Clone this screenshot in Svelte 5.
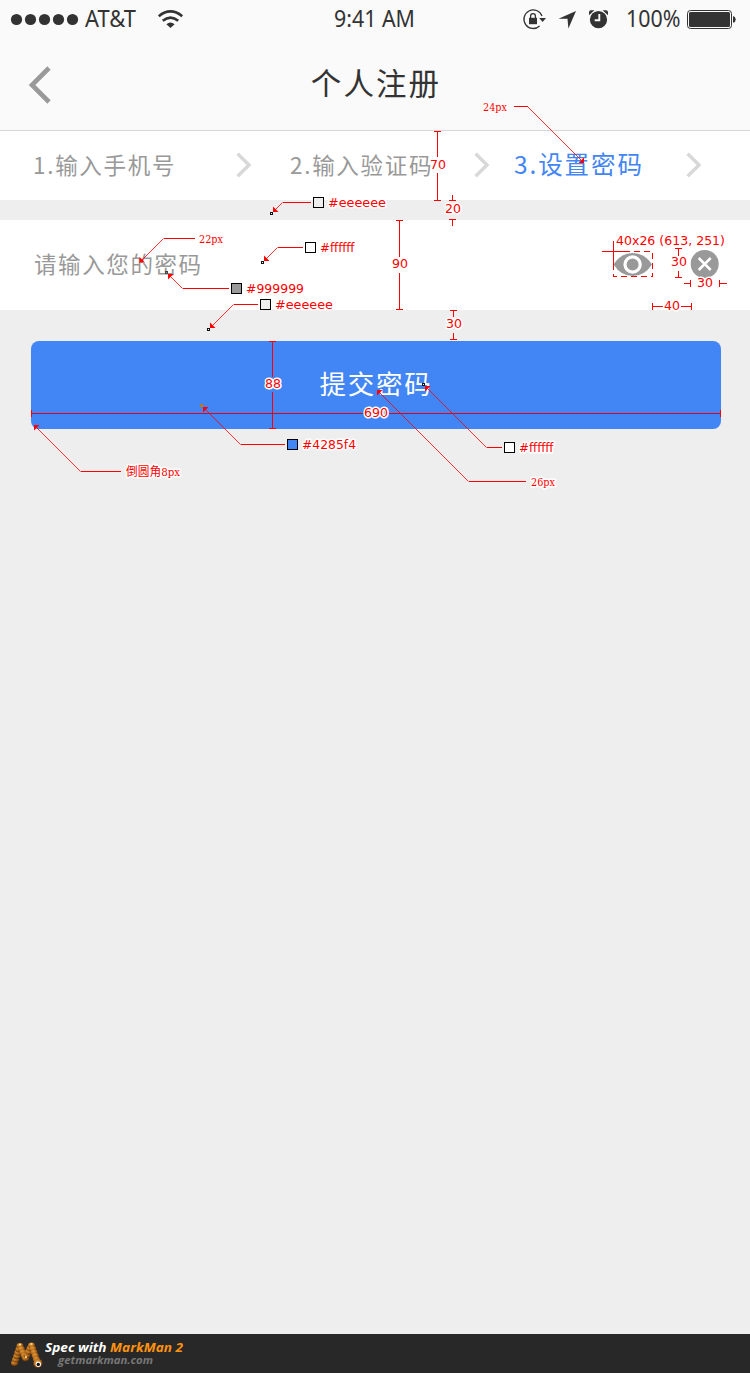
<script>
  // Callouts: a horizontal lead that bends to 45 degrees and ends in an arrowhead.
  const leads = [
    { from: 514, bend: 527.5, y: 106.5, tip: [584, 163] },
    { from: 195, bend: 163.5, y: 238.5, tip: [139.5, 262.5] },
    { from: 229, bend: 182.5, y: 288.5, tip: [168, 274] },
    { from: 258, bend: 233.5, y: 304.5, tip: [210, 328] },
    { from: 311, bend: 282.5, y: 202.5, tip: [273, 212] },
    { from: 303, bend: 277.5, y: 247.5, tip: [264, 261] },
    { from: 285, bend: 240.5, y: 444.5, tip: [203, 407] },
    { from: 502, bend: 486.5, y: 447.5, tip: [425, 386] },
    { from: 526, bend: 468.5, y: 481.5, tip: [377, 390] },
    { from: 121, bend: 80.5, y: 471.5, tip: [34, 425] }
  ];

  function head({ bend, y, tip }) {
    const [tx, ty] = tip;
    const sx = bend > tx ? 1 : -1;
    const sy = y > ty ? 1 : -1;
    return `${tx},${ty} ${tx + 5.5 * sx},${ty} ${tx},${ty + 5.5 * sy}`;
  }

  const swatches = [
    { x: 231, y: 283, fill: '#999999' },
    { x: 260, y: 299, fill: '#eeeeee' },
    { x: 313, y: 197, fill: '#eeeeee' },
    { x: 305, y: 242, fill: '#ffffff' },
    { x: 287, y: 439, fill: '#4285f4' },
    { x: 504, y: 442, fill: '#ffffff' }
  ];

  const samples = [
    { x: 165, y: 271, fill: '#999999', edge: '#444444' },
    { x: 207, y: 328, fill: '#ffffff', edge: '#111111' },
    { x: 270, y: 212, fill: '#ffffff', edge: '#111111' },
    { x: 261, y: 261, fill: '#ffffff', edge: '#111111' },
    { x: 200, y: 404, fill: '#bd7a0b', edge: '#bd7a0b' },
    { x: 422, y: 383, fill: '#ffffff', edge: '#111111' }
  ];

  const labels = [
    { t: '#999999', x: 246, y: 293, w: 58 },
    { t: '#eeeeee', x: 275, y: 309, w: 58 },
    { t: '#eeeeee', x: 328, y: 207, w: 58 },
    { t: '#ffffff', x: 320, y: 252, w: 34.5 },
    { t: '#4285f4', x: 302, y: 449, w: 54 },
    { t: '#ffffff', x: 519, y: 452, w: 34.5 },
    { t: '40x26 (613, 251)', x: 616, y: 245, w: 109 },
    { t: '70', x: 430, y: 169, w: 16 },
    { t: '20', x: 445, y: 213, w: 16 },
    { t: '90', x: 392, y: 268, w: 16 },
    { t: '30', x: 446, y: 328, w: 16 },
    { t: '30', x: 671, y: 266, w: 16 },
    { t: '30', x: 697, y: 287, w: 16 },
    { t: '40', x: 664, y: 310, w: 16 },
    { t: '88', x: 265, y: 388, w: 16 },
    { t: '690', x: 364, y: 417, w: 24 }
  ];

  const notes = [
    { cjk: '', t: '24px', x: 483, y: 111, w: 24 },
    { cjk: '', t: '22px', x: 199, y: 243, w: 24 },
    { cjk: '', t: '26px', x: 531, y: 486, w: 24 },
    { cjk: '倒圆角', t: '8px', x: 126, y: 476, w: 54 }
  ];

  const rules = [
    'M437.5 131V157M437.5 173V201M434 131.5h7M434 200.5h7',
    'M452.5 195v5M449 200.5h7M449 219.5h7M452.5 220v6',
    'M399.5 220V257M399.5 273V310M396 220.5h7M396 309.5h7',
    'M453.5 311v6M450 310.5h7M453.5 333v6M450 339.5h7',
    'M678.5 249v7M675 248.5h7M678.5 271v6M675 277.5h7',
    'M684 283.5h6M690.5 280v7M719.5 280v7M720 283.5h7',
    'M652.5 303v7M653 306.5h10M681 306.5h10M691.5 303v7',
    'M272.5 341V377M272.5 392V429M269 341.5h7M269 428.5h7',
    'M613.5 241v25M602 251.5h26'
  ];

  const steps = [
    { text: '1.输入手机号', cls: 'one' },
    { text: '2.输入验证码', cls: 'two' },
    { text: '3.设置密码', cls: 'three' }
  ];

  const beads = [
    [14.5, 31], [15.6, 27.6], [16.7, 24.2], [17.8, 20.8], [18.9, 17.4], [20, 14],
    [21.4, 17.2], [22.8, 20.4], [24.2, 23.6], [25.6, 26.2],
    [27, 23], [28.5, 19.8], [30, 16.6], [31.5, 13.6],
    [32.8, 17], [34, 20.4], [35.2, 23.8], [36.4, 27.2]
  ];
</script>

<div class="page">
  <header>
    <div class="status">
      <svg class="left" width="190" height="39" viewBox="0 0 190 39">
        {#each [16.5, 30.5, 44.5, 58.5, 72.5] as cx}
          <circle {cx} cy="19.5" r="5.6" />
        {/each}
        <text x="85" y="27" textLength="51" lengthAdjust="spacingAndGlyphs">AT&amp;T</text>
        <g fill="none" stroke="#333" stroke-width="2.7">
          <path d="M158.8 16.2Q170.5 6.7 182.2 16.2" />
          <path d="M162.8 20.8Q170.5 14.4 178.2 20.8" />
        </g>
        <path d="M166.4 24.2Q170.5 20.6 174.6 24.2L170.5 28Z" />
      </svg>
      <svg class="time" width="104" height="39" viewBox="-10 0 104 39">
        <text x="1" y="27" textLength="81" lengthAdjust="spacingAndGlyphs">9:41 AM</text>
      </svg>
      <svg class="right" width="230" height="39" viewBox="520 0 230 39">
        <path d="M542 16A9.3 9.3 0 1 0 539.6 26" fill="none" stroke="#333" stroke-width="1.3" />
        <path d="M539.2 18h6.800l-3.400 4z" />
        <path d="M529 17.800h8v6.400h-8z" />
        <path d="M530.600 18v-2a2.400 2.400 0 0 1 4.800 0v2" fill="none" stroke="#333" stroke-width="1.300" />
        <path d="M576 11L558.500 18.800H567.500L568.400 28.600Z" />
        <circle cx="598.500" cy="19.700" r="8.600" />
        <path d="M589 15.300v-3.100q0-2 2-2h3.400zM608 15.300v-3.100q0-2-2-2h-3.400z" />
        <path d="M599.300 14v6.200h-4.600" fill="none" stroke="#fafafa" stroke-width="1.900" />
        <text x="626" y="27" textLength="54.500" lengthAdjust="spacingAndGlyphs">100%</text>
        <rect x="687.500" y="10.500" width="44" height="18" rx="3" fill="none" stroke="#333" />
        <rect x="689" y="12" width="41" height="15" rx="1.500" />
        <path d="M733 16q2.700.700 2.700 3.400t-2.700 3.400z" />
      </svg>
    </div>
    <div class="nav">
      <svg width="24" height="40" viewBox="0 0 24 40">
        <path d="M21 3L4 20L21 37" fill="none" stroke="#999" stroke-width="4.600" />
      </svg>
      <h1>个人注册</h1>
    </div>
  </header>

  <nav class="steps">
    {#each steps as step}
      <div class="step {step.cls}">
        <span>{step.text}</span>
        <svg width="18" height="28" viewBox="0 0 18 28">
          <path d="M2.600 2.800L14 14L2.600 25.200" fill="none" stroke="#d8d8d8" stroke-width="3.400" />
        </svg>
      </div>
    {/each}
  </nav>

  <div class="field">
    <span>请输入您的密码</span>
    <svg class="eye" width="40" height="26" viewBox="0 0 40 26">
      <path d="M0.500 13.500Q8 2 19.700 2Q31.500 2 39 13.500Q31.500 25 19.700 25Q8 25 .500 13.500Z" fill="#999" />
      <circle cx="19.600" cy="13.500" r="7.600" fill="#999" stroke="#fff" stroke-width="3.200" />
    </svg>
    <svg class="clear" width="30" height="30" viewBox="0 0 30 30">
      <circle cx="14.700" cy="15" r="14" fill="#999" />
      <path d="M8.700 9L20.700 21M20.700 9L8.700 21" stroke="#fff" stroke-width="2.500" />
    </svg>
  </div>

  <main>
    <button type="button">提交密码</button>
  </main>

  <footer>
    <svg width="45" height="39" viewBox="0 0 45 39">
      <defs>
        <radialGradient id="bead" cx=".4" cy=".3" r=".75">
          <stop offset="0" stop-color="#e09a38" />
          <stop offset=".5" stop-color="#b56c1d" />
          <stop offset="1" stop-color="#552a06" />
        </radialGradient>
      </defs>
      {#each beads as [x, y]}
        <ellipse cx={x} cy={y - 2} rx="3.500" ry="3" fill="url(#bead)" />
      {/each}
      <circle cx="38" cy="29.500" r="4.500" fill="url(#bead)" />
      <circle cx="38.300" cy="30.200" r="2.700" fill="#fff" />
      <circle cx="38.300" cy="30.400" r="1.700" fill="#111" />
      <path d="M19 10.500h2M30.500 10h2M25 23h2" stroke="#ffe79b" stroke-width="1.500" />
    </svg>
    <svg width="150" height="39" viewBox="45 0 150 39">
      <text class="brand" x="45" y="18" textLength="138" lengthAdjust="spacingAndGlyphs" fill="#fff">Spec with <tspan fill="#ff930f">MarkMan 2</tspan></text>
      <text class="site" x="58" y="30" textLength="95" lengthAdjust="spacingAndGlyphs" fill="#777">getmarkman.com</text>
    </svg>
  </footer>

  <svg class="marks" width="750" height="500" viewBox="0 0 750 500">
    {#each leads as lead}
      <path class="rule" d="M{lead.from} {lead.y}H{lead.bend}" />
      <path class="slant" d="M{lead.bend} {lead.y}L{lead.tip[0]} {lead.tip[1]}" />
      <polygon points={head(lead)} fill="#f00" />
    {/each}
    {#each rules as d}
      <path class="rule" {d} />
    {/each}
    <path class="rule wide" d="M31 413.500H363M389 413.500H721" />
    <path class="rule" d="M31.500 410v7M720.500 410v7" />
    <rect class="rule" x="613.500" y="251.500" width="39" height="25" stroke-dasharray="6 4" />
    {#each swatches as s}
      <rect x={s.x + 0.5} y={s.y + 0.5} width="10" height="10" fill={s.fill} stroke="#000" shape-rendering="crispEdges" />
    {/each}
    {#each samples as s}
      <rect x={s.x + 0.5} y={s.y + 0.5} width="2" height="2" fill={s.fill} stroke={s.edge} shape-rendering="crispEdges" />
    {/each}
    {#each labels as l}
      <text class="label" x={l.x} y={l.y} textLength={l.w} lengthAdjust="spacingAndGlyphs">{l.t}</text>
    {/each}
    {#each notes as n}
      <text class="note" x={n.x} y={n.y} textLength={n.w} lengthAdjust="spacingAndGlyphs"><tspan class="cjk">{n.cjk}</tspan>{n.t}</text>
    {/each}
  </svg>
</div>

<style>
  :global(body) {
    margin: 0;
  }

  .page {
    position: relative;
    box-sizing: border-box;
    width: 750px;
    height: 1373px;
    display: flex;
    flex-direction: column;
    overflow: hidden;
    background: #eee;
    font-family: 'Noto Sans CJK SC', sans-serif;
  }

  svg {
    display: block;
    flex: none;
  }

  header {
    height: 130px;
    background: #fafafa;
    border-bottom: 1px solid #d8d8d8;
  }

  .status {
    display: flex;
    justify-content: space-between;
    height: 39px;
    fill: #333;
    font: 23px 'Noto Sans', sans-serif;
  }

  .time {
    margin-left: 40px;
  }

  .nav {
    display: grid;
    grid-template-columns: 52px 1fr 52px;
    align-items: center;
    height: 91px;
  }

  .nav svg {
    margin-left: 28px;
  }

  h1 {
    margin: 0 0 0 2px;
    padding-bottom: 6px;
    color: #333;
    font-size: 30.500px;
    font-weight: 400;
    letter-spacing: 2.100px;
    line-height: 44px;
    text-align: center;
  }

  .steps {
    display: flex;
    height: 69px;
    background: #fff;
  }

  .step {
    box-sizing: border-box;
    display: flex;
    justify-content: space-between;
    align-items: center;
    padding-bottom: 2px;
    color: #999;
    font-size: 22.500px;
    letter-spacing: 1.700px;
    white-space: nowrap;
  }

  .step span {
    padding-bottom: 2px;
  }

  .one {
    width: 253px;
    padding-left: 33px;
  }

  .two {
    width: 238px;
    padding-left: 37px;
  }

  .three {
    width: 212px;
    padding-left: 23px;
    color: #4285f4;
    font-size: 24.500px;
    letter-spacing: 1.900px;
  }

  .field {
    box-sizing: border-box;
    display: flex;
    align-items: center;
    height: 90px;
    margin-top: 20px;
    padding: 0 30px 2px 34px;
    background: #fff;
    color: #999;
    font-size: 22.500px;
    letter-spacing: 1.600px;
  }

  .field span {
    padding-bottom: 3px;
  }

  .eye {
    margin-left: auto;
  }

  .clear {
    margin-left: 37px;
  }

  main {
    flex: 1;
    padding: 31px 29px 0 31px;
  }

  button {
    display: block;
    width: 690px;
    height: 88px;
    padding: 0 0 5px;
    border: 0;
    border-radius: 8px;
    background: #4285f4;
    color: #fff;
    font: 26.500px 'Noto Sans CJK SC', sans-serif;
    letter-spacing: 1.700px;
  }

  footer {
    display: flex;
    height: 39px;
    background: #282828;
  }

  .brand {
    font: italic 700 13px 'Open Sans', sans-serif;
  }

  .site {
    font: italic 700 11px 'Open Sans', sans-serif;
  }

  .marks {
    position: absolute;
    top: 0;
    left: 0;
    pointer-events: none;
  }

  .rule {
    fill: none;
    stroke: #f00;
    shape-rendering: crispEdges;
  }

  .wide {
    stroke: #d5061f;
  }

  .slant {
    fill: none;
    stroke: #f00;
    stroke-width: 0.800;
  }

  .label,
  .note {
    fill: #f00;
    stroke: #fff;
    stroke-width: 3px;
    stroke-linejoin: round;
    paint-order: stroke;
  }

  .label {
    font: 13px 'DejaVu Sans', sans-serif;
  }

  .note {
    font: 10.500px 'DejaVu Serif', serif;
  }

  .cjk {
    font: 12px 'Noto Sans CJK SC', sans-serif;
  }
</style>
